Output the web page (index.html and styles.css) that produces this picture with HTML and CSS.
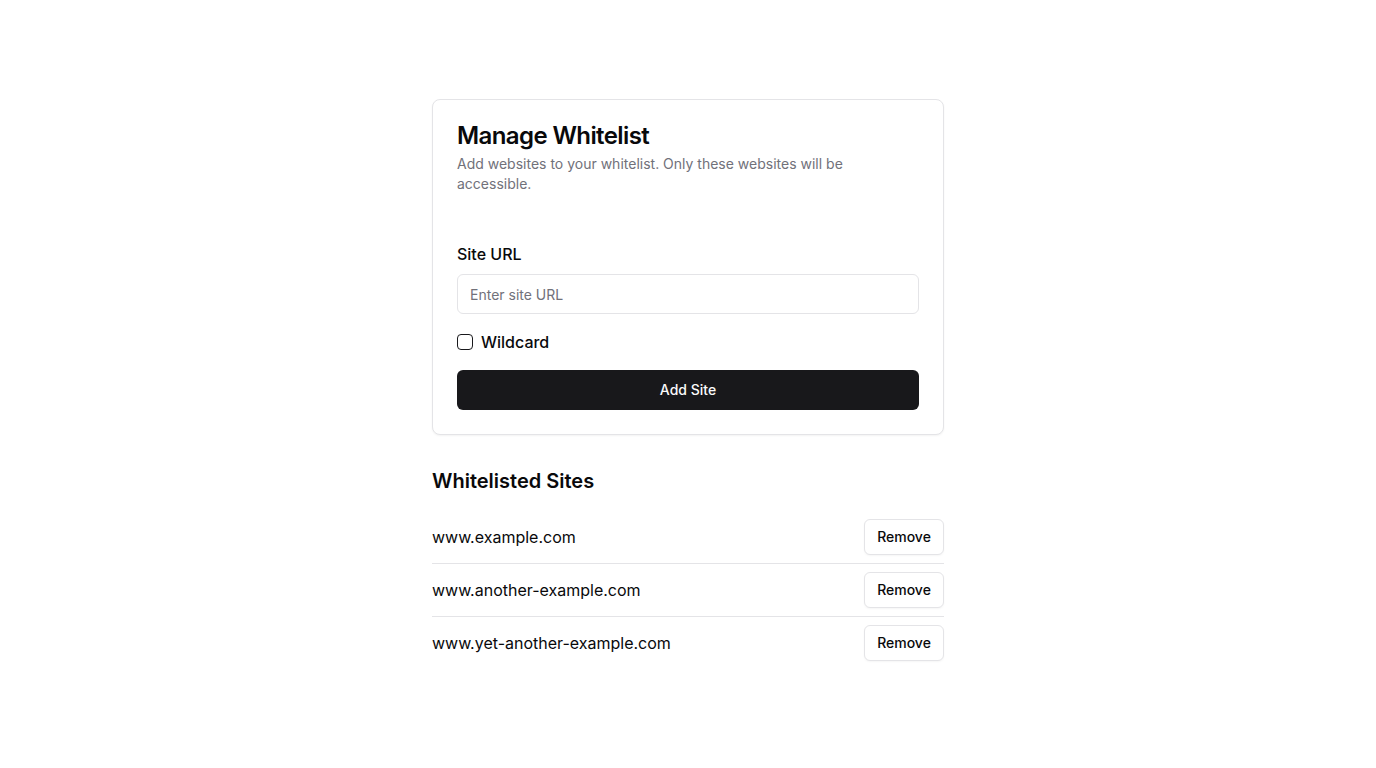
FILE: index.html
```html
<!DOCTYPE html>
<html lang="en">
<head>
<meta charset="utf-8">
<title>Manage Whitelist</title>
<link rel="stylesheet" href="styles.css">
</head>
<body>
<main class="page">
  <section class="card">
    <header class="card-header">
      <h1 class="card-title">Manage Whitelist</h1>
      <p class="card-desc">Add websites to your whitelist. Only these websites will be accessible.</p>
    </header>
    <form class="card-content">
      <label class="label" for="url">Site URL</label>
      <input class="input" id="url" type="text" placeholder="Enter site URL">
      <label class="check-row">
        <span class="checkbox"></span>
        <span>Wildcard</span>
      </label>
      <button type="button" class="btn-primary">Add Site</button>
    </form>
  </section>
  <h2 class="list-title">Whitelisted Sites</h2>
  <ul class="list">
    <li class="row"><span>www.example.com</span><button type="button" class="btn-outline">Remove</button></li>
    <li class="row"><span>www.another-example.com</span><button type="button" class="btn-outline">Remove</button></li>
    <li class="row"><span>www.yet-another-example.com</span><button type="button" class="btn-outline">Remove</button></li>
  </ul>
</main>
</body>
</html>
```
FILE: styles.css
```css
* { box-sizing: border-box; }
html, body { margin: 0; padding: 0; background: #fff; }
body {
  font-family: Inter, "Noto Sans", sans-serif;
  color: #09090b;
  -webkit-font-smoothing: antialiased;
}
.page {
  width: 512px;
  margin: 0 auto;
  padding-top: 99px;
}
.card {
  border: 1px solid #e4e4e7;
  border-radius: 8px;
  box-shadow: 0 1px 2px rgba(0,0,0,0.05);
  background: #fff;
}
.card-header {
  padding: 24px 24px 24px;
  display: flex;
  flex-direction: column;
  gap: 6px;
}
.card-title {
  margin: 0;
  font-size: 24px;
  line-height: 24px;
  font-weight: 600;
  letter-spacing: -0.6px;
}
.card-desc {
  margin: 0;
  font-size: 14px;
  line-height: 20px;
  color: #71717a;
  padding-right: 60px;
}
.card-content {
  padding: 24px;
  display: flex;
  flex-direction: column;
  margin: 0;
}
.label {
  font-size: 16px;
  line-height: 24px;
  font-weight: 500;
}
.input {
  margin-top: 8px;
  height: 40px;
  width: 100%;
  border: 1px solid #e4e4e7;
  border-radius: 6px;
  padding: 8px 12px;
  font-family: inherit;
  font-size: 14px;
  color: #09090b;
  outline: none;
}
.input::placeholder { color: #71717a; }
.check-row {
  margin-top: 16px;
  display: flex;
  align-items: center;
  gap: 8px;
  font-size: 16px;
  line-height: 24px;
  font-weight: 500;
}
.checkbox {
  width: 16px;
  height: 16px;
  border: 1px solid #18181b;
  border-radius: 4px;
  flex: none;
}
.btn-primary {
  margin-top: 16px;
  height: 40px;
  width: 100%;
  border: none;
  border-radius: 6px;
  background: #18181b;
  color: #fafafa;
  font-family: inherit;
  font-size: 14px;
  font-weight: 500;
  line-height: 20px;
  padding: 0 0 1px;
}
.list-title {
  margin: 32px 0 16px;
  font-size: 20px;
  line-height: 28px;
  font-weight: 600;
}
.list {
  list-style: none;
  margin: 0;
  padding: 0;
}
.row {
  display: flex;
  align-items: center;
  justify-content: space-between;
  padding: 8px 0;
  border-bottom: 1px solid #e4e4e7;
  font-size: 16px;
  line-height: 24px;
}
.row:last-child { border-bottom: none; }
.btn-outline {
  height: 36px;
  width: 80px;
  padding: 0 0 1px;
  border: 1px solid #e4e4e7;
  border-radius: 6px;
  background: #fff;
  color: #09090b;
  font-family: inherit;
  font-size: 14px;
  line-height: 20px;
  font-weight: 500;
  box-shadow: 0 1px 2px rgba(0,0,0,0.04);
}
```
